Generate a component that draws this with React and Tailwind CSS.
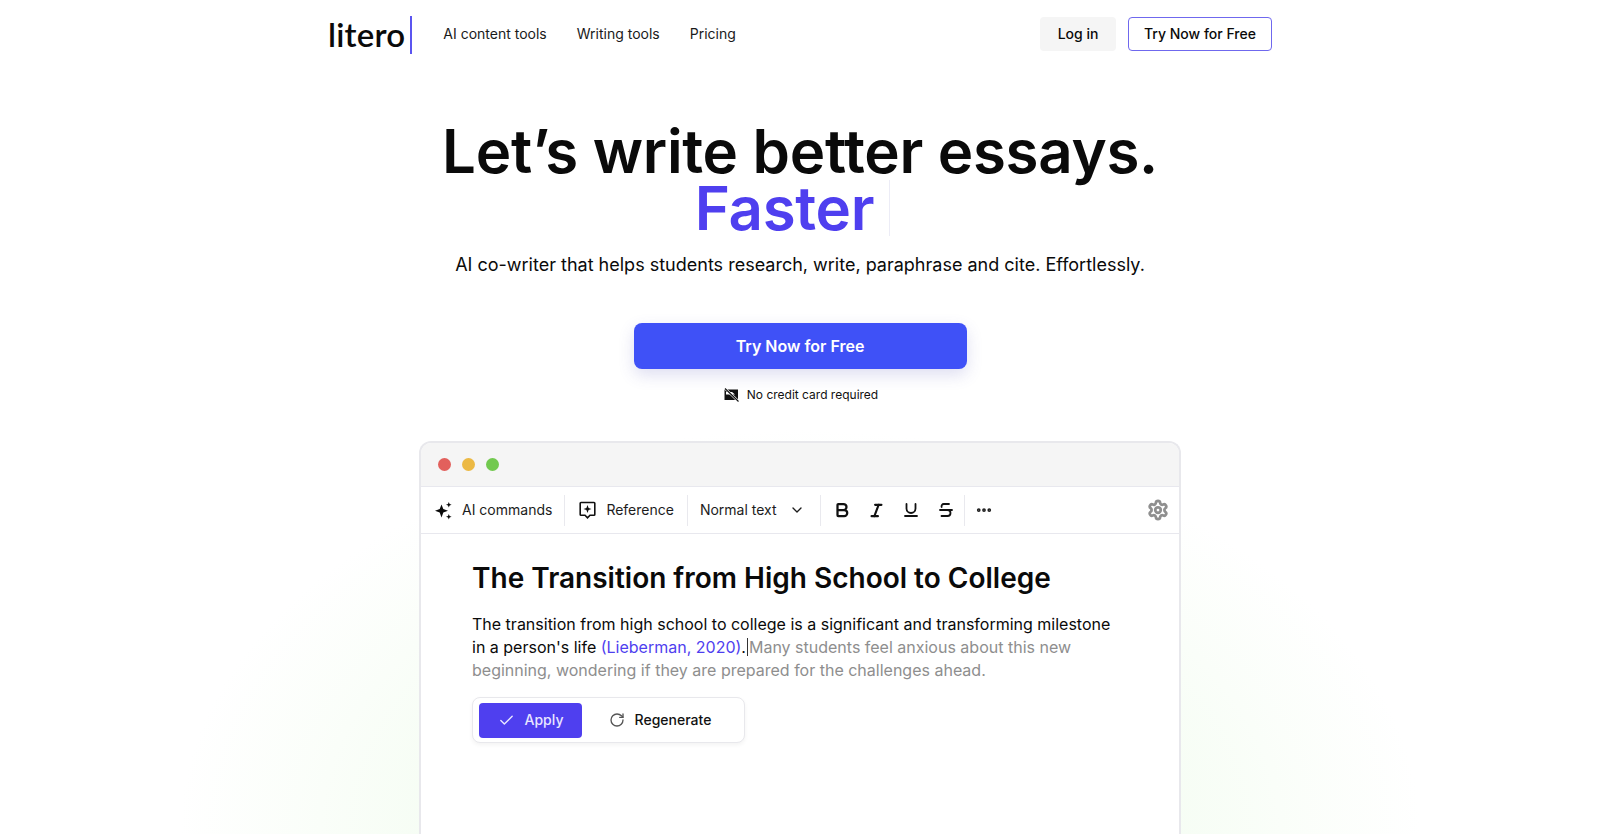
import React from "react";
import { Check, ChevronDown, MoreHorizontal, RotateCw, Settings, Bold, Italic, Underline, Strikethrough } from "lucide-react";

const navLinks = ["AI content tools", "Writing tools", "Pricing"];

const Sparkles = () => (
  <svg width="19" height="19" viewBox="0 0 19 19" fill="#0a0a0a">
    <path d="M7.5 3.5 L9.3 8 L14 9.8 L9.3 11.6 L7.5 16.5 L5.7 11.6 L1 9.8 L5.7 8 Z" />
    <path d="M14.8 1 L15.6 3 L17.6 3.8 L15.6 4.6 L14.8 6.6 L14 4.6 L12 3.8 L14 3 Z" />
    <path d="M14.8 13 L15.6 15 L17.6 15.8 L15.6 16.6 L14.8 18.6 L14 16.6 L12 15.8 L14 15 Z" />
  </svg>
);

const ReferenceIcon = () => (
  <svg width="17" height="18" viewBox="0 0 17 18" fill="none">
    <path d="M2 1.5 H15 a0.8 0.8 0 0 1 0.8 0.8 V13.5 a0.8 0.8 0 0 1 -0.8 0.8 H11 L8.5 16.8 L6 14.3 H2 a0.8 0.8 0 0 1 -0.8 -0.8 V2.3 a0.8 0.8 0 0 1 0.8 -0.8 Z" stroke="#111" strokeWidth="1.6" />
    <path d="M8.5 4 L9.6 6.9 L12.5 8 L9.6 9.1 L8.5 12 L7.4 9.1 L4.5 8 L7.4 6.9 Z" fill="#111" />
  </svg>
);

const NoCardIcon = () => (
  <svg width="15" height="14" viewBox="0 0 15 14">
    <path d="M0.5 1.5 H14 V12 H0.5 Z" fill="#111" />
    <path d="M2 4 H8 L11 6.5 H2 Z" fill="#fff" />
    <path d="M1 0.5 L14.5 13.5" stroke="#fff" strokeWidth="2.4" />
    <path d="M1 0.5 L14.5 13.5" stroke="#111" strokeWidth="1.1" />
  </svg>
);

const ToolDivider = () => <div className="w-px h-[31px] bg-[#e9e9ee]" />;

export default function App() {
  return (
    <div className="relative h-[834px] overflow-hidden bg-white text-[#0a0a0a] font-['Inter',sans-serif]">
      {/* green glow behind the editor */}
      <div className="absolute left-[180px] top-[430px] w-[1240px] h-[800px] rounded-full bg-[radial-gradient(closest-side,#eefdea_0%,#f5fdf3_55%,#ffffff_100%)]" />

      <header className="relative w-[944px] mx-auto h-[68px] flex items-center justify-between">
        <div className="flex items-center">
          <div className="flex items-center h-[38px] border-r-2 border-[#5b55f0] pr-[5px] mt-[1px]">
            <span className="text-[33px] font-semibold font-['Lato',sans-serif] tracking-[0.2px] leading-none">litero</span>
          </div>
          <nav className="flex items-center gap-[30px] ml-[31px] text-sm">
            {navLinks.map((link) => (
              <a key={link} className="text-[#1a1a1a]">{link}</a>
            ))}
          </nav>
        </div>
        <div className="flex items-center gap-3 text-sm font-medium">
          <button className="w-[76px] h-[34px] rounded bg-[#f5f5f5]">Log in</button>
          <button className="w-[144px] h-[34px] rounded border-[1.5px] border-[#6f68ee]">Try Now for Free</button>
        </div>
      </header>

      <main className="relative flex flex-col items-center">
        <h1 className="mt-[55px] text-[60px] leading-[57px] font-semibold tracking-[-0.3px] text-center">
          Let’s write better essays.
          <span className="flex justify-center text-[#4f3fef]">
            <span className="relative pr-[16px] ml-[-15px]">
              Faster
              <span className="absolute right-0 top-0 w-px h-[56px] bg-[#ececf6]" />
            </span>
          </span>
        </h1>
        <p className="mt-[14px] text-lg leading-7">AI co-writer that helps students research, write, paraphrase and cite. Effortlessly.</p>

        <button className="mt-[44px] w-[333px] h-[46px] rounded-lg bg-[#3f51f7] text-white font-semibold text-base shadow-[0_6px_16px_rgba(70,70,180,0.18)]">
          Try Now for Free
        </button>
        <div className="mt-[18px] flex items-center gap-[8px] text-xs text-[#111] ml-[2px]">
          <NoCardIcon />
          <span>No credit card required</span>
        </div>

        <section className="mt-[38px] w-[762px] h-[600px] rounded-t-xl border-2 border-b-0 border-[#e8e8ec] bg-white">
          <div className="h-[44px] bg-[#f5f5f5] rounded-t-[10px] border-b border-[#e8e8ee] flex items-center gap-[11px] pl-[17px]">
            <span className="size-[13px] rounded-full bg-[#e2605c]" />
            <span className="size-[13px] rounded-full bg-[#ecb944]" />
            <span className="size-[13px] rounded-full bg-[#72c94f]" />
          </div>
          <div className="h-[47px] border-b border-[#e8e8ee] flex items-center text-sm text-[#1c1c1c]">
            <div className="flex items-center gap-[9px] pl-[13px] pr-[12px]">
              <Sparkles />
              <span>AI commands</span>
            </div>
            <ToolDivider />
            <div className="flex items-center gap-[10px] pl-[14px] pr-[13px]">
              <ReferenceIcon />
              <span>Reference</span>
            </div>
            <ToolDivider />
            <div className="flex items-center gap-[12px] pl-[12px] pr-[15px]">
              <span>Normal text</span>
              <ChevronDown size={16} strokeWidth={2} />
            </div>
            <ToolDivider />
            <div className="flex items-center gap-[17px] pl-[12px] pr-[9px] text-[#111]">
              <Bold size={18} strokeWidth={3} />
              <Italic size={17} strokeWidth={3} />
              <Underline size={18} strokeWidth={2.4} />
              <Strikethrough size={18} strokeWidth={2.4} />
            </div>
            <ToolDivider />
            <MoreHorizontal size={18} strokeWidth={3} className="ml-[10px]" />
            <Settings size={22} strokeWidth={3} className="ml-auto mr-[10px] text-[#8f8f8f]" />
          </div>
          <div className="pl-[51px] pr-[60px]">
            <h2 className="mt-[26px] text-[28px] leading-9 font-semibold">The Transition from High School to College</h2>
            <p className="mt-[17px] text-base leading-[23px]">
              The transition from high school to college is a significant and transforming milestone in a person's life{" "}
              <span className="text-[#4f3fef]">(Lieberman, 2020)</span>.
              <span className="inline-block w-px h-[18px] bg-[#333] align-[-3px] mx-[1px]" />
              <span className="text-[#8e8e8e]">Many students feel anxious about this new beginning, wondering if they are prepared for the challenges ahead.</span>
            </p>
            <div className="mt-[15px] inline-flex items-center h-[46px] px-[6px] rounded-lg border border-[#e8e8ec] bg-white shadow-[0_2px_4px_rgba(0,0,0,0.05)] text-sm font-medium">
              <button className="w-[103px] h-[35px] rounded bg-[#4f3fef] text-[#e8e6ff] flex items-center justify-center gap-[10px]">
                <Check size={17} strokeWidth={2} />
                Apply
              </button>
              <button className="w-[156px] h-[35px] flex items-center justify-center gap-[10px] text-[#111]">
                <RotateCw size={16} strokeWidth={2} className="text-[#555]" />
                Regenerate
              </button>
            </div>
          </div>
        </section>
      </main>
    </div>
  );
}
